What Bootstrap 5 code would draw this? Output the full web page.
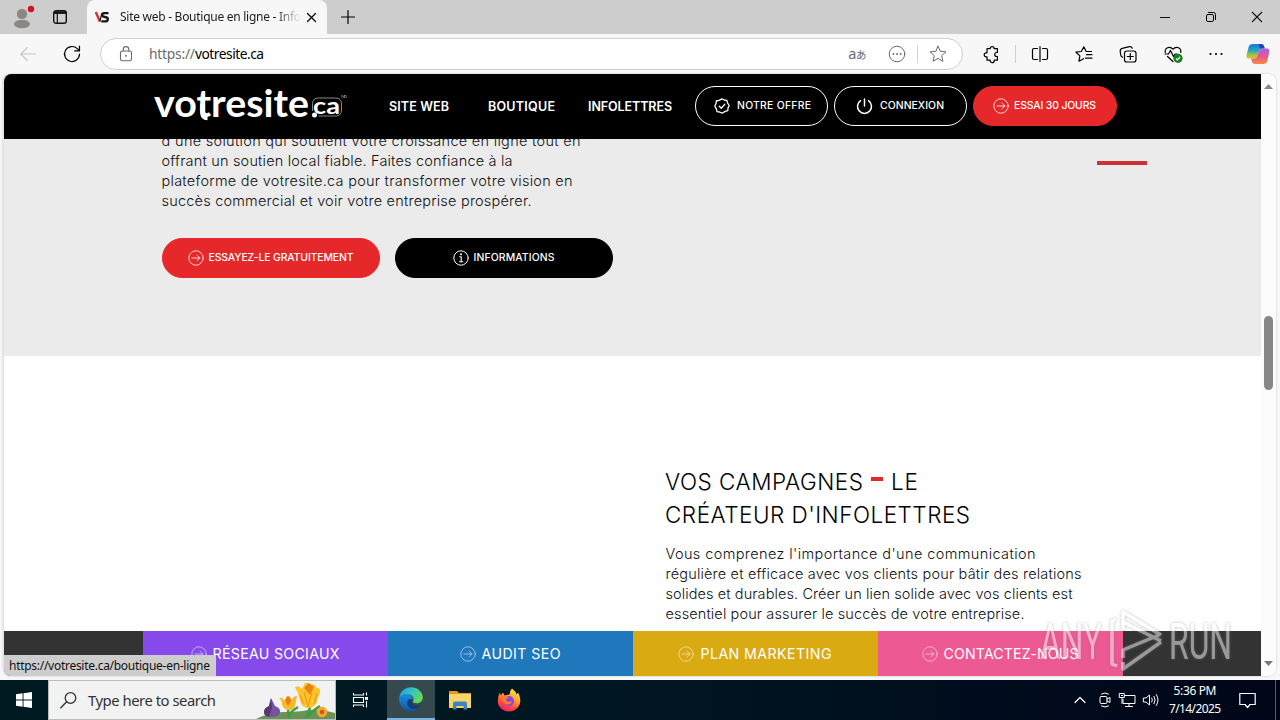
<!DOCTYPE html>
<html lang="fr">
<head>
    <meta charset="UTF-8">
    <meta name="viewport" content="width=device-width, initial-scale=1.0">
    <title>Site web - Boutique en ligne - Infolettres</title>
    <link href="https://cdn.jsdelivr.net/npm/bootstrap@5.3.0/dist/css/bootstrap.min.css" rel="stylesheet">
    <style>
        body {
            width: 1280px;
            height: 720px;
            overflow: hidden;
            background: #f7f7f7;
            color: #000;
            font-family: "Noto Sans", "Open Sans", sans-serif;
            font-size: 12px;
        }
        svg { display: block; flex: none; overflow: visible; }
        .ln { fill: none; stroke: currentColor; stroke-linecap: round; stroke-linejoin: round; }
        [data-w] { display: inline-block; white-space: nowrap; flex: none; }

        /* Title bar */
        .titlebar { height: 34px; background: #cdcdcd; padding-left: 11px; }
        .ic-workspace { margin-left: 20px; }
        .tab-active { width: 240px; height: 34px; margin-left: 20px; padding-left: 8px; background: #f7f7f7; border-radius: 8px 8px 0 0; }
        .tab-title { width: 181px; margin-left: 10px; overflow: hidden; color: #1b1b1b; -webkit-mask-image: linear-gradient(90deg, #000 155px, transparent 181px); mask-image: linear-gradient(90deg, #000 155px, transparent 181px); }
        .ic-tabclose { margin-left: 6px; }
        .ic-newtab { margin-left: 14px; }
        .win-btns { margin-left: auto; gap: 36px; padding-right: 18px; }

        /* Toolbar */
        .toolbar { height: 40px; padding-left: 20px; }
        .ic-reload { margin-left: 27px; }
        .address { width: 863px; height: 32px; margin-left: 19px; background: #fff; border: 1px solid #d0d0d0; border-radius: 16px; color: #6b6b6b; font-size: 13.8px; }
        .ic-lock { margin-left: 18px; }
        .url { margin-left: 16px; }
        .translate { margin-left: auto; font: 14.5px/18px "Noto Sans", "Noto Sans CJK JP", sans-serif; letter-spacing: -.5px; }
        .translate span { font-size: 10.5px; font-family: "Noto Sans CJK JP", sans-serif; }
        .ic-more { margin-left: 22px; }
        .bar-sep { width: 1px; height: 18px; background: #d0d0d0; }
        .ic-star { margin: 0 15px 0 11px; }
        .address .bar-sep { margin-left: 11px; }
        .ic-puzzle { margin-left: 20px; }
        .toolbar > .bar-sep { margin-left: 14px; }
        .ic-split { margin-left: 15px; }
        .ic-favs, .ic-coll { margin-left: 26px; }
        .ic-heart { margin-left: 27px; }
        .ic-dots { margin-left: 25px; }
        .ic-copilot { margin-left: 21px; }

        /* Web page */
        .page-frame { width: 1273px; height: 602px; margin-left: 3px; background: #fff; border-left: 1px solid #e4e4e4; border-radius: 8px; overflow: hidden; box-shadow: 0 0 2px rgba(0, 0, 0, .25); }
        .site { width: 1257px; font-family: Inter, "Liberation Sans", sans-serif; }
        .site-header { height: 65px; background: #000; color: #fff; padding-left: 151px; }
        .logo { width: 194px; height: 42px; }
        .menu { margin: 2px 0 0 40px; font-weight: 600; font-size: 12.5px; }
        .menu a, .pill, .quick a { color: #fff; text-decoration: none; }
        .menu a + a { margin-left: 39px; }
        .menu a:last-child { margin-left: 33px; }
        .pill { display: flex; align-items: center; height: 40px; border-radius: 20px; border: 1px solid #fff; font-size: 10.4px; font-weight: 450; }
        .pill svg { color: #fff; }
        .header-pills { margin: -1px 0 0 23px; gap: 6px; }
        .header-pills .pill { width: 133px; padding-left: 18px; gap: 7px; }
        .header-pills .pill:nth-child(2) { padding-left: 21px; }
        .pill.pill-red { background: #e6282b; border-color: #e6282b; }
        .header-pills .pill-red { width: 144px; padding-left: 19px; gap: 5px; }
        .section-shop { height: 217px; background: #ebebeb; padding-left: 158px; overflow: hidden; }
        .body-text { font-size: 14.5px; line-height: 20px; font-weight: 350; color: #111; }
        .body-text [data-w] { position: relative; left: -.5px; }
        .section-shop .body-text { margin-top: -8px; height: 80px; }
        .shop-pills { margin-top: 27px; gap: 15px; }
        .shop-pills .pill { width: 218px; justify-content: center; gap: 5px; background: #000; border-color: #000; padding-right: 1px; }
        .shop-pills .pill.pill-red { background: #e6282b; border-color: #e6282b; }
        .accent { width: 50px; height: 4px; margin: 22px 0 0 484px; background: #cf3036; }
        .section-news { height: 275px; padding: 109px 0 0 662px; }
        .section-news h2 { font-size: 22.5px; line-height: 33px; font-weight: 300; margin: 0 0 13px -1px; color: #000; }
        .dash { width: 12px; height: 4px; margin: 0 8px 5px 8px; background: #e02a30; }
        .quick { height: 45px; background: #333; padding-left: 139px; font-size: 14.2px; }
        .quick a { width: 245px; height: 45px; padding-right: 1px; gap: 6px; }
        .quick svg { opacity: .65; }
        .q-purple { background: #864aec; }
        .q-blue { background: #2078bc; }
        .q-yellow { background: #daaa12; }
        .q-pink { background: #ed5993; }
        .scroller { width: 15px; height: 602px; background: #fcfcfc; padding: 10px 0 10px; }
        .thumb { width: 9px; height: 74px; margin-top: 227px; border-radius: 5px; background: #878787; }

        /* Laid over the page */
        .status-link { left: 4px; top: 655px; width: 212px; height: 21px; padding-left: 5px; background: #cdcdcd; border-radius: 0 0 0 6px; color: #111; line-height: 21px; font-size: 12px; }
        .watermark { left: 1036px; top: 604px; }

        /* Taskbar */
        .taskbar { height: 40px; margin-top: 4px; background: linear-gradient(90deg, #001a22, #001722 45%, #000b1c 80%, #000618); color: #fff; }
        .start-btn { width: 48px; height: 40px; }
        .search-box { width: 288px; height: 40px; background: #f2f2f2; border: 1px solid #bbb; color: #333; font-size: 14.8px; }
        .ic-search { margin-left: 11px; }
        .search-box [data-w] { margin-left: 11px; }
        .task-cell { width: 49px; height: 40px; }
        .task-cell.on { width: 48px; background: #36494f; border-bottom: 2px solid #76b5e4; margin-left: 2px; }
        .tray { margin-left: auto; }
        .ic-meet { margin-left: 12px; }
        .ic-net { margin-left: 7px; }
        .ic-vol { margin-left: 7px; }
        .clock { width: 56px; margin-left: 7px; font-size: 12px; line-height: 18px; }
        .ic-note { margin-left: 16px; }
        .desk-edge { width: 1px; height: 40px; margin: 0 4px 0 19px; background: #566070; }
    </style>
</head>
<body>
    <svg width="0" height="0" class="position-absolute">
        <symbol id="arrow" viewBox="0 0 16 16">
            <circle cx="8" cy="8" r="7.2" class="ln"/>
            <path d="M4 8h8M9 5.2 12 8l-3 2.8" class="ln"/>
        </symbol>
    </svg>

    <!-- Title bar -->
    <div class="titlebar d-flex align-items-center">
        <svg width="22" height="24" viewBox="0 0 22 24">
            <ellipse cx="11" cy="19" rx="8" ry="4.3" fill="#8b8785"/>
            <circle cx="11" cy="9" r="5.6" fill="#8b8785" stroke="#cdcdcd"/>
            <circle cx="20" cy="4" r="3.2" fill="#d5101f"/>
        </svg>
        <svg width="14" height="14" viewBox="0 0 14 14" class="ic-workspace">
            <rect x=".7" y=".7" width="12.6" height="12.6" rx="2.3" fill="none" stroke="#111" stroke-width="1.4"/>
            <path d="M1 2.6h12" stroke="#111" stroke-width="2.6"/>
            <path d="M4.3 3v10" stroke="#111" stroke-width="1.2"/>
        </svg>
        <div class="tab-active d-flex align-items-center">
            <svg width="15" height="16" viewBox="0 0 15 16">
                <path d="M.8 3 5 12.700" stroke="#d92f36" stroke-width="2.4"/>
                <path d="M7 4 4.900 12" stroke="#222" stroke-width="1.3"/>
                <path d="M13.500 4.200H9.200Q7 4.400 7.200 6.200q.2 1.600 2.800 1.800 3 .3 2.800 2.400-.1 2-2.600 2H6.300" fill="none" stroke="#161616" stroke-width="2.3"/>
            </svg>
            <div class="tab-title"><span data-w="181">Site web - Boutique en ligne - Info</span></div>
            <svg width="9" height="9" viewBox="0 0 9 9" class="ic-tabclose"><path d="m.5.5 8 8m0-8-8 8" class="ln" stroke-width="1.2"/></svg>
        </div>
        <svg width="14" height="14" viewBox="0 0 14 14" class="ic-newtab"><path d="M7 .5v13M.5 7h13" class="ln" stroke-width="1.2"/></svg>
        <div class="win-btns d-flex align-items-center">
            <svg width="10" height="10" viewBox="0 0 10 10"><path d="M0 5.500h10" stroke="#111"/></svg>
            <svg width="10" height="10" viewBox="0 0 10 10"><rect x=".5" y="2.500" width="7" height="7" rx="1.400" class="ln"/><path d="M2.500.5h5q2 0 2 2v5" class="ln"/></svg>
            <svg width="10" height="10" viewBox="0 0 10 10"><path d="m0 0 10 10M10 0 0 10" stroke="#111" stroke-width="1.1"/></svg>
        </div>
    </div>

    <!-- Toolbar -->
    <div class="toolbar d-flex align-items-center">
        <svg width="16" height="16" viewBox="0 0 16 16" color="#c6c6c6"><path d="M15.500 8H.8M7.300 1.500.8 8l6.500 6.500" class="ln" stroke-width="1.1"/></svg>
        <svg width="18" height="18" viewBox="0 0 18 18" class="ic-reload"><path d="M16.500 9a7.500 7.500 0 1 1-2.200-5.300l2 2M16.500 1v4.900h-4.800" class="ln" stroke-width="1.2"/></svg>
        <div class="address d-flex align-items-center">
            <svg width="14" height="16" viewBox="0 0 14 16" class="ic-lock"><rect x="1.500" y="5" width="11" height="9.700" rx="1.800" class="ln" stroke-width="1.1"/><path d="M4.200 5V3.400a2.800 2.800 0 0 1 5.600 0V5" class="ln" stroke-width="1.1"/><circle cx="7" cy="9.800" r=".9" fill="#555"/></svg>
            <span class="url"><span data-w="46">https://</span><span data-w="69" class="text-black">votresite.ca</span></span>
            <span class="translate">a<span>あ</span></span>
            <svg width="18" height="18" viewBox="0 0 18 18" class="ic-more"><circle cx="9" cy="9" r="7.800" class="ln"/><path d="M5.400 9h.01M9 9h.01M12.600 9h.01" class="ln" stroke-width="1.900"/></svg>
            <div class="bar-sep"></div>
            <svg width="18" height="18" viewBox="0 0 18 18" class="ic-star"><path d="m9 1.200 2.300 5.100 5.600.6-4.200 3.800 1.200 5.600L9 13.400l-4.900 2.900 1.200-5.600L1.100 6.900l5.600-.6z" class="ln"/></svg>
        </div>
        <svg width="18" height="18" viewBox="0 0 18 18" class="ic-puzzle"><path d="M4 3.700h3.200a2 2 0 1 1 4 0h3.200v3.800h-.7a2 2 0 0 0 0 4h.7v3.700h-3.200v.5a2 2 0 0 1-4 0v-.5H4v-3.400h-.8a2 2 0 0 1 0-4H4z" class="ln" stroke-width="1.2"/></svg>
        <div class="bar-sep"></div>
        <svg width="18" height="18" viewBox="0 0 18 18" class="ic-split"><path d="M9 1.500v15M6.500 3.500H3a1.500 1.500 0 0 0-1.500 1.500v8A1.500 1.500 0 0 0 3 14.500h3.500M11.500 3.500H15a1.500 1.500 0 0 1 1.500 1.500v8a1.500 1.500 0 0 1-1.500 1.500h-3.500" class="ln" stroke-width="1.2"/></svg>
        <svg width="18" height="18" viewBox="0 0 18 18" class="ic-favs"><path d="M16.500 6.500h-5.300L8.800 1.800 6.300 6.500 1 7.200l3.900 3.700-1 5.300 4.600-2.500M11.500 9.700h5.500M10.500 13.200H17" class="ln" stroke-width="1.200"/></svg>
        <svg width="18" height="18" viewBox="0 0 18 18" class="ic-coll"><rect x="5.500" y="6" width="11.500" height="11" rx="2.300" class="ln" stroke-width="1.200"/><path d="M11.300 8.500v6M8.300 11.500h6M3.500 12.300Q2 11.500 1.700 9.800L1.200 6.300Q1 4 3.300 3.400l7-1.800q2.200-.4 3 1.600" class="ln" stroke-width="1.200"/></svg>
        <svg width="18" height="18" viewBox="0 0 18 18" class="ic-heart">
            <path d="M1.300 7.500C.3 3.300 5.500.3 9 4.200c3.500-3.900 8.700-.9 7.700 3.300M1 9h3.500l2-3.500 3 6L11 9h2M3.500 11.500 9 16.500" class="ln" stroke-width="1.200"/>
            <circle cx="14" cy="13.300" r="4.600" fill="#16801c"/>
            <path d="m12 13.500 1.400 1.400 2.700-2.900" fill="none" stroke="#fff" stroke-width="1.200"/>
        </svg>
        <svg width="18" height="18" viewBox="0 0 18 18" class="ic-dots"><path d="M3.500 9h.01M9 9h.01M14.500 9h.01" class="ln" stroke-width="2.200"/></svg>
        <svg width="24" height="22" viewBox="0 0 24 22" class="ic-copilot">
            <defs>
                <linearGradient id="cpA" x1="0" y1="0" x2="0" y2="1"><stop offset="0" stop-color="#1b78dd"/><stop offset=".45" stop-color="#25a5c0"/><stop offset=".75" stop-color="#9cc43c"/><stop offset="1" stop-color="#f3b52c"/></linearGradient>
                <linearGradient id="cpB" x1="0" y1="0" x2="0" y2="1"><stop offset="0" stop-color="#a463e8"/><stop offset=".5" stop-color="#e5568f"/><stop offset="1" stop-color="#f88b3c"/></linearGradient>
            </defs>
            <path d="M6.500 1H15q2.500 0 3.300 3l.5 1.500h-3q-2 0-2.700 2.500l-1.500 5Q10.600 15.500 8 15.500H3q-3.200 0-2.300-4L2.600 4Q3.500 1 6.500 1z" fill="url(#cpA)"/>
            <path d="M15 1q2.500 0 3.300 3l.5 1.500H14L12.500 1z" fill="#1a49b5"/>
            <path d="M17.500 21H9q-2.500 0-3.300-3L5 15.500h3q2.600 0 3.500-2.500L13 8q.7-2.500 3-2.500h5q3 0 2.200 4l-2 8.500q-.9 3-3.700 3z" fill="url(#cpB)"/>
        </svg>
    </div>

    <!-- Page -->
    <div class="page-frame d-flex">
        <div class="site">
            <header class="site-header d-flex align-items-center">
                <svg class="logo" viewBox="0 0 194 42" fill="#fff" font-family="Lato">
                    <text x="-1" y="30.500" font-size="38" font-weight="700" textLength="155" lengthAdjust="spacingAndGlyphs">votresite</text>
                    <path d="M47.500 18v8.500q0 5.500 5 5.500" fill="none" stroke="#fff" stroke-width="4.500"/>
                    <circle cx="159.500" cy="29" r="2.500"/>
                    <text x="158" y="27.500" font-size="22" font-weight="700" textLength="27" lengthAdjust="spacingAndGlyphs">ca</text>
                    <path d="M157.500 25v-7q0-6 6-6h17q6 0 6 6v6q0 6-6 6h-17" fill="none" stroke="#aaa" stroke-width=".8"/>
                    <text x="186" y="11.500" font-size="4.500" fill="#aaa" textLength="6">MD</text>
                </svg>
                <nav class="menu d-flex">
                    <a href="#" data-w="60">SITE WEB</a>
                    <a href="#" data-w="67">BOUTIQUE</a>
                    <a href="#" data-w="84">INFOLETTRES</a>
                </nav>
                <div class="header-pills d-flex">
                    <a href="#" class="pill">
                        <svg width="16" height="16" viewBox="0 0 16 16"><path d="M8 .8 10.200 2l2.600.3.700 2.500L15.200 7.500 14 10l-.2 2.600-2.600.8L8 15.200 5.600 14 3 13.700l-.6-2.600L.8 8 2 5.600 2.300 3l2.700-.7z" class="ln" stroke-width="1.300"/><path d="m5.300 8.200 2 2 3.500-3.900" class="ln" stroke-width="1.300"/></svg>
                        <span data-w="74">NOTRE OFFRE</span>
                    </a>
                    <a href="#" class="pill">
                        <svg width="17" height="16" viewBox="0 0 17 16"><path d="M8.500 1v7M4.500 2.700a7 7 0 1 0 8 0" class="ln" stroke-width="1.500"/></svg>
                        <span data-w="64">CONNEXION</span>
                    </a>
                    <a href="#" class="pill pill-red">
                        <svg width="16" height="16" stroke-width=".8"><use href="#arrow"/></svg>
                        <span data-w="82">ESSAI 30 JOURS</span>
                    </a>
                </div>
            </header>

            <section class="section-shop d-flex align-items-start">
                <div>
                    <div class="body-text">
                        <div data-w="419">d'une solution qui soutient votre croissance en ligne tout en</div><br>
                        <div data-w="351">offrant un soutien local fiable. Faites confiance à la</div><br>
                        <div data-w="411">plateforme de votresite.ca pour transformer votre vision en</div><br>
                        <div data-w="370">succès commercial et voir votre entreprise prospérer.</div>
                    </div>
                    <div class="shop-pills d-flex">
                        <a href="#" class="pill pill-red">
                            <svg width="16" height="16" stroke-width=".8"><use href="#arrow"/></svg>
                            <span data-w="145">ESSAYEZ-LE GRATUITEMENT</span>
                        </a>
                        <a href="#" class="pill">
                            <svg width="16" height="16" viewBox="0 0 16 16"><circle cx="8" cy="8" r="7.200" class="ln"/><path d="M6.700 6.700H8.200V11.500M6.500 11.700h3.300" class="ln" stroke-width="1.100"/><circle cx="8" cy="4.300" r="1" fill="#fff"/></svg>
                            <span data-w="81">INFORMATIONS</span>
                        </a>
                    </div>
                </div>
                <div class="accent"></div>
            </section>

            <section class="section-news">
                <h2>
                    <span class="d-flex align-items-center"><span data-w="198">VOS CAMPAGNES</span><span class="dash"></span><span data-w="27">LE</span></span>
                    <span data-w="305">CRÉATEUR D'INFOLETTRES</span>
                </h2>
                <div class="body-text">
                    <div data-w="370">Vous comprenez l'importance d'une communication</div><br>
                    <div data-w="416">régulière et efficace avec vos clients pour bâtir des relations</div><br>
                    <div data-w="407">solides et durables. Créer un lien solide avec vos clients est</div><br>
                    <div data-w="359">essentiel pour assurer le succès de votre entreprise.</div>
                </div>
            </section>

            <div class="quick d-flex">
                <a href="#" class="q-purple d-flex align-items-center justify-content-center"><svg width="16" height="16" stroke-width=".8"><use href="#arrow"/></svg><span data-w="127">RÉSEAU SOCIAUX</span></a>
                <a href="#" class="q-blue d-flex align-items-center justify-content-center"><svg width="16" height="16" stroke-width=".8"><use href="#arrow"/></svg><span data-w="79">AUDIT SEO</span></a>
                <a href="#" class="q-yellow d-flex align-items-center justify-content-center"><svg width="16" height="16" stroke-width=".8"><use href="#arrow"/></svg><span data-w="131">PLAN MARKETING</span></a>
                <a href="#" class="q-pink d-flex align-items-center justify-content-center"><svg width="16" height="16" stroke-width=".8"><use href="#arrow"/></svg><span data-w="135">CONTACTEZ-NOUS</span></a>
            </div>
        </div>
        <div class="scroller d-flex flex-column align-items-center">
            <svg width="9" height="5" viewBox="0 0 9 5"><path d="M0 5 4.500 0 9 5z" fill="#878787"/></svg>
            <div class="thumb"></div>
            <svg width="9" height="5" viewBox="0 0 9 5" class="mt-auto"><path d="M0 0 4.500 5 9 0z" fill="#777"/></svg>
        </div>
    </div>

    <div class="status-link position-absolute"><span data-w="201">https://votresite.ca/boutique-en-ligne</span></div>

    <svg class="watermark position-absolute" width="200" height="72" viewBox="0 0 200 72" opacity=".5">
        <g filter="drop-shadow(0 0 1.500px #777)">
            <g fill="#fff" font-family="Roboto" font-weight="400">
                <g transform="translate(4 55) scale(1 1.800)"><text font-size="28" textLength="62" lengthAdjust="spacingAndGlyphs">ANY</text></g>
                <g transform="translate(133 55) scale(1 1.800)"><text font-size="28" textLength="63" lengthAdjust="spacingAndGlyphs">RUN</text></g>
            </g>
            <path d="M80 15l-4 2v43l5 2M87 26V8l38 23M87 18l38 19M87 58v7l38-27M87 54v-8l36-15" fill="none" stroke="#fff" stroke-width="3.500" stroke-linejoin="round"/>
        </g>
    </svg>

    <!-- Taskbar -->
    <div class="taskbar d-flex align-items-center">
        <div class="start-btn d-flex align-items-center justify-content-center">
            <svg width="16" height="16" viewBox="0 0 16 16" fill="#fff"><path d="M0 2.300 6.600 1.300v6.200H0zM7.500 1.200 16 0v7.500H7.500zM0 8.400h6.600v6.300L0 13.700zM7.500 8.400H16V16l-8.500-1.200z"/></svg>
        </div>
        <div class="search-box d-flex align-items-center">
            <svg width="17" height="17" viewBox="0 0 17 17" class="ic-search"><circle cx="10.500" cy="6" r="5.300" class="ln" stroke-width="1.300"/><path d="M6.700 9.800.8 15.700" class="ln" stroke-width="1.400"/></svg>
            <span data-w="128">Type here to search</span>
            <svg width="79" height="38" viewBox="0 0 79 38" class="ms-auto">
                <path d="M0 38q14-7 28-7t24-2q14-1 27 3v6z" fill="#699453"/>
                <path d="M15 17l4 8q6 2 5 7-1 4-8 4-8 0-8-5 0-4 5-6z" fill="#77549f"/>
                <path d="M15 17l1 10-3 9q-5-1-5-5 0-4 5-6z" fill="#563875"/>
                <path d="M32 29q1 4 1 8M54 26q-1 6-4 11M64 25q-8 5-12 11M42 26q-7 4-9 9" fill="none" stroke="#3c9d45" stroke-width="2.500"/>
                <path d="M23 17q4-1 5 3l3-5q4 1 4 5 2-5 6-5-1 6-2 10-2 5-7 4-5-1-6-6 0-4-3-6z" fill="#f8bb27"/>
                <path d="m29 19 3-4q3 1 3 5l-3 5z" fill="#e77f16"/>
                <path d="M39 6q4-2 7 2l3-6q4-1 6 2 4-2 6 3 4 0 3 5-2 3-3 9-3 6-9 6-7-1-8-8-1-5-5-13z" fill="#fbc42b"/>
                <path d="m48 7 5-5 5 4-4 8z" fill="#e9821a"/>
                <path d="m48 11 4 14 4-13M44 14l4 9M61 12l-3 11" fill="none" stroke="#eda01a" stroke-width="1.300"/>
                <circle cx="66" cy="31" r="5.300" fill="#f4a62a"/><circle cx="66" cy="31" r="2.200" fill="#c9581b"/>
            </svg>
        </div>
        <div class="task-cell d-flex align-items-center justify-content-center">
            <svg width="18" height="16" viewBox="0 0 18 16"><path d="M1.500 1v2h10V1M1.500 5.500h10v5h-10zM1.500 15v-2h10v2M14.500.500v3M14.500 9v6.500" fill="none" stroke="#fff" stroke-width="1.100"/><path d="M13 5h3v2.800h-3z" fill="#fff"/></svg>
        </div>
        <div class="task-cell on d-flex align-items-center justify-content-center">
            <svg width="24" height="24" viewBox="0 0 24 24">
                <defs>
                    <linearGradient id="edA" x1="0" y1="0" x2="1" y2=".5"><stop offset="0" stop-color="#2496dc"/><stop offset=".5" stop-color="#2fc3c4"/><stop offset="1" stop-color="#63d957"/></linearGradient>
                    <linearGradient id="edB" x1="0" y1="0" x2="0" y2="1"><stop offset="0" stop-color="#1b8ede"/><stop offset="1" stop-color="#0c58a8"/></linearGradient>
                </defs>
                <path d="M.3 11C1 4.500 6 .2 12 .2c7 0 11.800 5 11.800 10 0 4-3 6-6.300 6-2.500 0-4-.9-3.500-2C16.500 10 11 5.500 5 8Q1.500 9.500.3 11z" fill="url(#edA)"/>
                <path d="M.2 12C.5 8.500 4 7 7.300 7c3.200 0 6.700 2 6.700 5.500C9 10 6.500 16 10 20c2.200 2.300 6 3 9.500 1.200C14 25.500 7 24.500 3.500 20.500 1 18 .1 15 .2 12z" fill="url(#edB)"/>
                <path d="M12.500 12C8 12 7 16.500 10 20c3 3 9 2.500 12-2-4 1.700-9 .8-9.500-3.500z" fill="#123e78"/>
            </svg>
        </div>
        <div class="task-cell d-flex align-items-center justify-content-center">
            <svg width="22" height="20" viewBox="0 0 22 20">
                <path d="M0 1h8l2 2h12v4H0z" fill="#dd9c22"/><path d="M0 4h22v14H0z" fill="#fbd469"/>
                <path d="M4 19.500v-6q0-2 2-2h10q2 0 2 2v6h-3.500V16h-7v3.500z" fill="#3c86be"/>
            </svg>
        </div>
        <div class="task-cell d-flex align-items-center justify-content-center">
            <svg width="24" height="24" viewBox="0 0 24 24">
                <defs><linearGradient id="fx" x1=".8" y1="0" x2=".3" y2="1"><stop offset="0" stop-color="#fff04a"/><stop offset=".4" stop-color="#ffa52b"/><stop offset=".7" stop-color="#ff4e3d"/><stop offset="1" stop-color="#e61f70"/></linearGradient></defs>
                <path d="M15 .5q4 3 4.500 6l1.500-2q2.500 4 2.300 8.500C23 19 18 23.500 12 23.500S.8 19 .7 13Q.7 8 3 4.500l.7 3L6 4.500l1.500 3 5-1Q12.500 3 15 .5z" fill="url(#fx)"/>
                <circle cx="12" cy="13" r="5" fill="#8545e5"/>
                <path d="M5 9q4-3 7 1-3 0-3 2 1 3 6 1-1 4-5 3.500Q5 15 5 9z" fill="#ff7a31"/>
            </svg>
        </div>
        <div class="tray d-flex align-items-center">
            <svg width="12" height="8" viewBox="0 0 12 8"><path d="m1 6.500 5-5 5 5" class="ln" stroke-width="1.200"/></svg>
            <svg width="14" height="16" viewBox="0 0 14 16" class="ic-meet"><rect x="2" y="4.500" width="7" height="7" rx="1.200" class="ln"/><path d="m9 7 3-1.500v5L9 9M3.500 2Q7-.2 10.500 2M3.500 14q3.500 2.200 7 0" class="ln"/></svg>
            <svg width="17" height="16" viewBox="0 0 17 16" class="ic-net"><path d="M6 3.500h10v8H4V7.500M10 11.500v3M6.500 14.500h7M.7 1.500h4.600v4H.7zM3 5.500v6" class="ln"/><path d="M2 3.500h2" stroke="#fff"/></svg>
            <svg width="17" height="16" viewBox="0 0 17 16" class="ic-vol"><path d="M.7 6H3l3.500-3v10L3 10H.7zM8.800 6q1.300 2 0 4M11 4.300q2.400 3.700 0 7.400M13.300 2.600q3.600 5.400 0 10.800" class="ln"/></svg>
            <div class="clock text-center"><span data-w="43">5:36 PM</span><span data-w="52">7/14/2025</span></div>
            <svg width="17" height="17" viewBox="0 0 17 17" class="ic-note"><path d="M.8 1.500h15.400v11H11l-2.500 3-2.500-3H.8z" class="ln" stroke-width="1.200"/></svg>
            <div class="desk-edge"></div>
        </div>
    </div>

    <script src="https://cdn.jsdelivr.net/npm/bootstrap@5.3.0/dist/js/bootstrap.bundle.min.js"></script>
    <script>
        // Track each label so that it takes the width in data-w
        document.querySelectorAll('[data-w]').forEach(function(el) {
            const width = parseFloat(el.dataset.w);
            const spacing = (width - el.getBoundingClientRect().width) / (el.textContent.length - 1);
            el.style.letterSpacing = spacing + 'px';
            el.style.marginRight = -spacing + 'px';
        });
    </script>
</body>
</html>
